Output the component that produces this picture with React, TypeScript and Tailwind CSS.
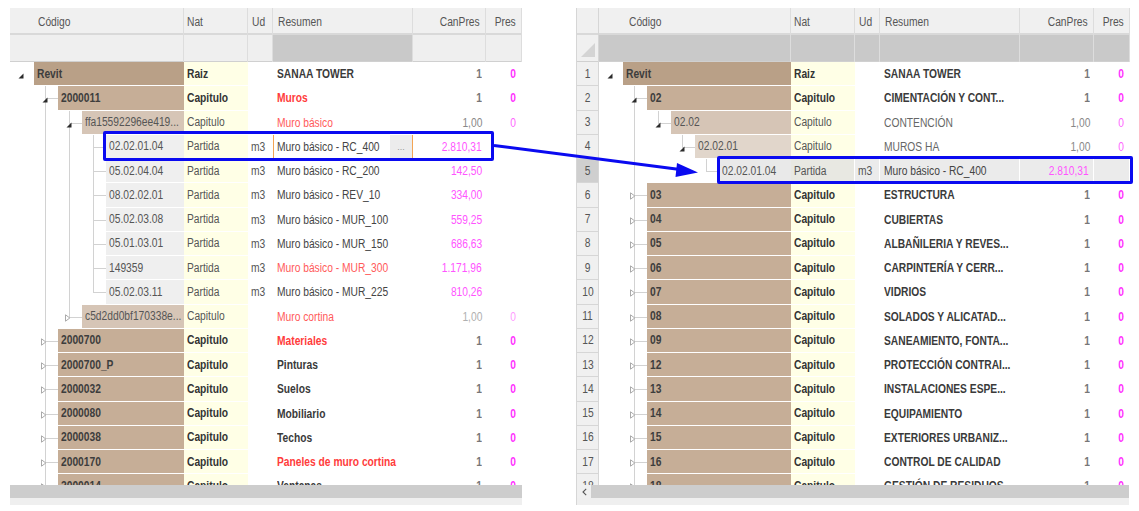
import React from 'react'

type Row = {
  lv: number
  code: string
  nat: string
  ud?: string
  res: string
  can: string
  pres?: string
  exp?: 'o' | 'c'
  g: number[] // ancestor slots that carry a running guide line
  end?: boolean // last child
  k: 'b' | 'n' | 'p'
  red?: boolean
  dim?: boolean
  sel?: boolean
}

const chap = (code: string, res: string, red = false): Row => ({
  lv: 1, code, nat: 'Capitulo', res, red, can: '1', pres: '0', exp: 'c', g: [], k: 'b',
})

const leaf = (code: string, res: string, can: string, extra: Partial<Row> = {}): Row => ({
  lv: 3, code, nat: 'Partida', ud: 'm3', res, can, g: [1, 2], k: 'p', ...extra,
})

const LEFT: Row[] = [
  { lv: 0, code: 'Revit', nat: 'Raiz', res: 'SANAA TOWER', can: '1', pres: '0', exp: 'o', g: [], k: 'b' },
  { lv: 1, code: '2000011', nat: 'Capitulo', res: 'Muros', red: true, can: '1', pres: '0', exp: 'o', g: [], k: 'b' },
  { lv: 2, code: 'ffa15592296ee419...', nat: 'Capitulo', res: 'Muro básico', red: true, can: '1,00', pres: '0', exp: 'o', g: [1], k: 'n' },
  leaf('02.02.01.04', 'Muro básico - RC_400', '2.810,31', { sel: true }),
  leaf('05.02.04.04', 'Muro básico - RC_200', '142,50'),
  leaf('08.02.02.01', 'Muro básico - REV_10', '334,00'),
  leaf('05.02.03.08', 'Muro básico - MUR_100', '559,25'),
  leaf('05.01.03.01', 'Muro básico - MUR_150', '686,63'),
  leaf('149359', 'Muro básico - MUR_300', '1.171,96', { red: true }),
  leaf('05.02.03.11', 'Muro básico - MUR_225', '810,26', { end: true }),
  { lv: 2, code: 'c5d2dd0bf170338e...', nat: 'Capitulo', res: 'Muro cortina', red: true, can: '1,00', pres: '0', exp: 'c', g: [1], end: true, k: 'n', dim: true },
  chap('2000700', 'Materiales', true),
  chap('2000700_P', 'Pinturas'),
  chap('2000032', 'Suelos'),
  chap('2000080', 'Mobiliario'),
  chap('2000038', 'Techos'),
  chap('2000170', 'Paneles de muro cortina', true),
  chap('2000014', 'Ventanas'),
]

const RIGHT: Row[] = [
  { lv: 0, code: 'Revit', nat: 'Raiz', res: 'SANAA TOWER', can: '1', pres: '0', exp: 'o', g: [], k: 'b' },
  { lv: 1, code: '02', nat: 'Capitulo', res: 'CIMENTACIÓN Y CONT...', can: '1', pres: '0', exp: 'o', g: [], k: 'b' },
  { lv: 2, code: '02.02', nat: 'Capitulo', res: 'CONTENCIÓN', can: '1,00', pres: '0', exp: 'o', g: [1], end: true, k: 'n' },
  { lv: 3, code: '02.02.01', nat: 'Capitulo', res: 'MUROS HA', can: '1,00', pres: '0', exp: 'o', g: [1], end: true, k: 'n' },
  { lv: 4, code: '02.02.01.04', nat: 'Partida', ud: 'm3', res: 'Muro básico - RC_400', can: '2.810,31', g: [1], end: true, k: 'p', sel: true },
  chap('03', 'ESTRUCTURA'),
  chap('04', 'CUBIERTAS'),
  chap('05', 'ALBAÑILERIA Y REVES...'),
  chap('06', 'CARPINTERÍA Y CERR...'),
  chap('07', 'VIDRIOS'),
  chap('08', 'SOLADOS Y ALICATAD...'),
  chap('09', 'SANEAMIENTO, FONTA...'),
  chap('12', 'PROTECCIÓN CONTRAI...'),
  chap('13', 'INSTALACIONES ESPE...'),
  chap('14', 'EQUIPAMIENTO'),
  chap('15', 'EXTERIORES URBANIZ...'),
  chap('16', 'CONTROL DE CALIDAD'),
  chap('18', 'GESTIÓN DE RESIDUOS'),
]

const lvBg = ['bg-[#b9a087]', 'bg-[#c6ae97]', 'bg-[#d6c5b6]', 'bg-[#e1d6cb]']

type Cols = { code: string; nat: string; ud: string; res: string; can: string; pres: string }
const LC: Cols = { code: 'w-[174px]', nat: 'w-[64px]', ud: 'w-[25px]', res: 'w-[140px]', can: 'w-[73px]', pres: 'w-[36px]' }
const RC: Cols = { code: 'w-[192px]', nat: 'w-[64px]', ud: 'w-[25px]', res: 'w-[140px]', can: 'w-[74px]', pres: 'w-[36px]' }

// the grid font is a condensed Arial look: squeeze Liberation Sans horizontally
function T({ children, a = 'l' }: { children?: React.ReactNode; a?: 'l' | 'r' | 'c' }) {
  const o = a === 'r' ? 'origin-right' : a === 'c' ? 'origin-center' : 'origin-left'
  return <span className={`inline-block whitespace-nowrap leading-[16px] scale-x-[0.82] ${o}`}>{children}</span>
}

function Expander({ open }: { open: boolean }) {
  return open ? (
    <svg className="absolute left-[8px] top-[11px]" width="6" height="6" viewBox="0 0 6 6">
      <path d="M5.5 0.5V5.5H0.5Z" fill="#2b2b2b" />
    </svg>
  ) : (
    <svg className="absolute left-[7px] top-[9px]" width="6" height="8" viewBox="0 0 6 8">
      <path d="M0.5 0.8L4.8 4L0.5 7.2Z" fill="white" stroke="#a0a0a0" strokeWidth="0.9" />
    </svg>
  )
}

function CodeCell({ r, w }: { r: Row; w: string }) {
  const slots = []
  for (let i = 0; i <= r.lv; i++) {
    const own = i === r.lv
    slots.push(
      <div key={i} className="relative w-6 h-full shrink-0">
        {!own && r.g.includes(i) && <div className="absolute left-[11px] top-0 bottom-0 w-px bg-[#d2d2d2]" />}
        {own && r.lv > 0 && (
          <>
            <div className={`absolute left-[11px] top-0 w-px bg-[#d2d2d2] ${r.end ? 'h-1/2' : 'bottom-0'}`} />
            <div className="absolute left-[11px] right-0 top-1/2 h-px bg-[#d2d2d2]" />
          </>
        )}
        {own && r.exp && <Expander open={r.exp === 'o'} />}
      </div>
    )
  }
  const isLeaf = r.k === 'p'
  const bg = isLeaf ? (r.sel && r.lv === 4 ? 'bg-[#e9e9e9]' : 'bg-[#efefef]') : lvBg[r.lv]
  const txt = r.k === 'b' ? 'font-bold text-[#3d3d3d]' : 'text-[#555]'
  return (
    <div className={`${w} h-full flex shrink-0`}>
      {slots}
      <div className={`flex-1 h-full ${bg} border-b border-white flex items-center pl-[3px] overflow-hidden ${txt}`}>
        <T>{r.code}</T>
      </div>
    </div>
  )
}

function DataRow({ r, c, num }: { r: Row; c: Cols; num?: number }) {
  const b = r.k === 'b'
  const natTxt = b ? 'font-bold text-[#333]' : 'text-[#555]'
  const resTxt = r.red
    ? b ? 'font-bold text-[#ff3c3c]' : 'text-[#ff5a5a]'
    : b ? 'font-bold text-[#3a3a3a]' : r.k === 'n' ? 'text-[#666]' : 'text-[#444]'
  const canTxt = b ? 'font-bold text-[#777]' : r.k === 'n' ? (r.dim ? 'text-[#b0b0b0]' : 'text-[#888]') : 'text-[#ff55ff]'
  const presTxt = b ? 'font-bold text-[#ff33ff]' : r.dim ? 'text-[#ff9cff]' : 'text-[#ff66ff]'
  const rsel = r.sel && num !== undefined
  const lsel = r.sel && num === undefined
  const cellBg = rsel ? 'bg-[#ebebeb] border-r border-white' : ''
  return (
    <div className="flex h-[24.25px]">
      {num !== undefined && (
        <div className={`w-[22px] shrink-0 h-full flex items-center justify-center border-r border-b border-[#d6d6d6] text-[#555] ${rsel ? 'bg-[#cfcfcf]' : 'bg-[#f0f0f0]'}`}>
          <T a="c">{num}</T>
        </div>
      )}
      <CodeCell r={r} w={c.code} />
      <div className={`${c.nat} shrink-0 h-full flex items-center pl-[3px] border-b border-white ${rsel ? 'bg-[#e8e8e2] border-r' : 'bg-[#ffffe6]'} ${natTxt}`}>
        <T>{r.nat}</T>
      </div>
      <div className={`${c.ud} shrink-0 h-full flex items-center pl-[3px] text-[#555] ${cellBg}`}>
        <T>{r.ud}</T>
      </div>
      {lsel ? (
        <div className={`${c.res} shrink-0 h-full flex items-center border-x border-[#f3a454]`}>
          <span className={`flex-1 h-full flex items-center pl-[3px] overflow-hidden ${resTxt}`}>
            <T>{r.res}</T>
          </span>
          <span className="w-[22px] h-full bg-[#ececec] flex items-end justify-center pb-[7px] text-[9px] leading-none text-[#999]">...</span>
        </div>
      ) : (
        <div className={`${c.res} shrink-0 h-full flex items-center pl-[4px] overflow-hidden ${resTxt} ${cellBg}`}>
          <T>{r.res}</T>
        </div>
      )}
      <div className={`${c.can} shrink-0 h-full flex items-center justify-end pr-[4px] ${canTxt} ${cellBg}`}>
        <T a="r">{r.can}</T>
      </div>
      <div className={`${c.pres} shrink-0 h-full flex items-center justify-end pr-[6px] ${presTxt} ${rsel ? 'bg-[#ebebeb]' : ''}`}>
        <T a="r">{r.pres}</T>
      </div>
    </div>
  )
}

function HeaderCell({ w, label, right, pl, bg2 }: { w: string; label: string; right?: boolean; pl: string; bg2: string }) {
  return (
    <div className={`${w} shrink-0 flex flex-col border-r border-[#dddddd]`}>
      <div className={`h-[27px] bg-[#f0f0f0] border-b-2 border-[#d9d9d9] flex items-center pt-[3px] text-[#555] ${right ? 'justify-end pr-[5px]' : pl}`}>
        <T a={right ? 'r' : 'l'}>{label}</T>
      </div>
      <div className={`h-[27px] ${bg2} border-b border-[#d0d0d0]`} />
    </div>
  )
}

function Scrollbar({ arrow }: { arrow?: boolean }) {
  return (
    <div className="flex flex-col">
      <div className="h-[13px] flex">
        {arrow && (
          <div className="w-[14px] bg-[#f0f0f0] flex items-center justify-center">
            <svg width="5" height="8" viewBox="0 0 5 8">
              <path d="M4.2 0.8L1 4L4.2 7.2" fill="none" stroke="#555" strokeWidth="1.1" />
            </svg>
          </div>
        )}
        <div className="flex-1 bg-[#cdcdcd]" />
      </div>
      <div className="h-[7px] bg-[#efefef]" />
    </div>
  )
}

function LeftPanel() {
  const light = 'bg-[#efefef]'
  return (
    <div className="w-[512px] flex flex-col">
      <div className="flex">
        <HeaderCell w={LC.code} label="Código" pl="pl-7" bg2={light} />
        <HeaderCell w={LC.nat} label="Nat" pl="pl-[3px]" bg2={light} />
        <HeaderCell w={LC.ud} label="Ud" pl="pl-[4px]" bg2={light} />
        <HeaderCell w={LC.res} label="Resumen" pl="pl-[5px]" bg2="bg-[#c9c9c9]" />
        <HeaderCell w={LC.can} label="CanPres" right pl="" bg2={light} />
        <HeaderCell w={LC.pres} label="Pres" right pl="" bg2={light} />
      </div>
      <div className="h-[423px] overflow-hidden bg-white">
        {LEFT.map((r, i) => (
          <DataRow key={i} r={r} c={LC} />
        ))}
      </div>
      <Scrollbar />
    </div>
  )
}

function RightPanel() {
  const dark = 'bg-[#c9c9c9]'
  return (
    <div className="w-[553px] flex flex-col border-l border-[#d6d6d6]">
      <div className="flex">
        <div className="w-[22px] shrink-0 flex flex-col bg-[#f0f0f0] border-r border-[#d6d6d6]">
          <div className="h-[27px] border-b-2 border-[#d9d9d9]" />
          <div className="h-[27px] flex items-end justify-end pr-[3px] pb-[4px] border-b border-[#d0d0d0]">
            <svg width="14" height="14" viewBox="0 0 14 14">
              <path d="M14 0V14H0Z" fill="#d4d4d4" />
            </svg>
          </div>
        </div>
        <HeaderCell w={RC.code} label="Código" pl="pl-[30px]" bg2={dark} />
        <HeaderCell w={RC.nat} label="Nat" pl="pl-[3px]" bg2={dark} />
        <HeaderCell w={RC.ud} label="Ud" pl="pl-[4px]" bg2={dark} />
        <HeaderCell w={RC.res} label="Resumen" pl="pl-[5px]" bg2={dark} />
        <HeaderCell w={RC.can} label="CanPres" right pl="" bg2={dark} />
        <HeaderCell w={RC.pres} label="Pres" right pl="" bg2={dark} />
      </div>
      <div className="h-[423px] overflow-hidden bg-white">
        {RIGHT.map((r, i) => (
          <DataRow key={i} r={r} c={RC} num={i + 1} />
        ))}
      </div>
      <Scrollbar arrow />
    </div>
  )
}

export default function App() {
  return (
    <div className="relative w-[1139px] h-[511px] bg-white overflow-hidden text-[12.5px] leading-none font-['Liberation_Sans',Arial,sans-serif]">
      <div className="flex pt-2 pl-[10px] gap-[54px]">
        <LeftPanel />
        <RightPanel />
      </div>

      {/* highlight boxes + arrow drawn over the grids */}
      <div className="absolute left-[103px] top-[131px] w-[391px] h-[30px] border-[3px] border-[#0a0af0] rounded-[2px] pointer-events-none" />
      <div className="absolute left-[717px] top-[156px] w-[416px] h-[28px] border-[3px] border-[#0a0af0] rounded-[2px] pointer-events-none" />
      <svg className="absolute inset-0 pointer-events-none" width="1139" height="511" viewBox="0 0 1139 511">
        <line x1="494" y1="145.5" x2="680" y2="169.5" stroke="#0a0af0" strokeWidth="3" />
        <path d="M698 172.5L677 163L675.5 177Z" fill="#0a0af0" />
      </svg>
    </div>
  )
}
